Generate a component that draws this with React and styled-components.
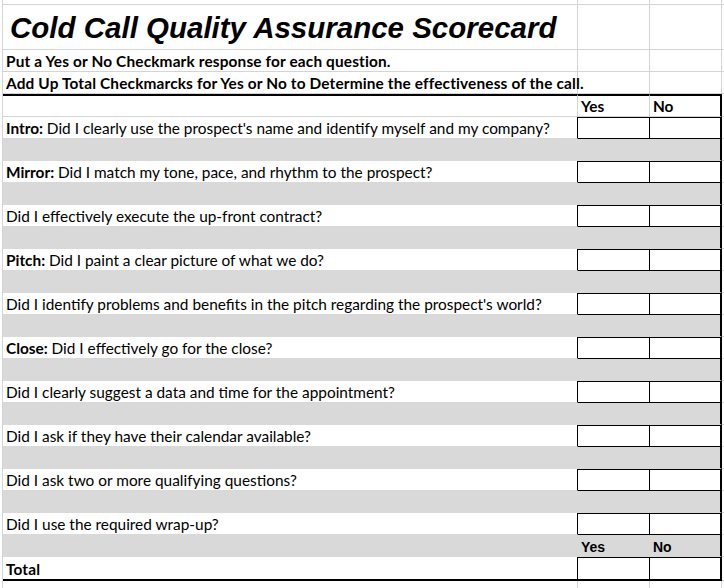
import React from 'react';
import styled, { createGlobalStyle } from 'styled-components';

const GRID = '#d4d4d4';
const FILL = '#d9d9d9';
const INK = '#000';

const GlobalStyle = createGlobalStyle`
  html, body {
    margin: 0;
    padding: 0;
    background: #fff;
  }
  body {
    font-family: Lato, "Noto Sans", sans-serif;
    color: ${INK};
    overflow: hidden;
  }
`;

const Sheet = styled.div`
  width: 724px;
  height: 588px;
  overflow: hidden;
  background: #fff;
`;

const Row = styled.div`
  display: grid;
  grid-template-columns: 3px 575px 72px 72px 1fr;
  height: ${p => p.$h}px;
  box-sizing: border-box;
`;

const Gutter = styled.div`
  border-right: 1px solid ${GRID};
`;

// column A: the question text
const LabelCell = styled.div`
  box-sizing: border-box;
  display: flex;
  align-items: ${p => (p.$center ? 'center' : 'flex-end')};
  padding: 0 0 1px 3px;
  white-space: nowrap;
  font-size: 15.4px;
  font-weight: ${p => (p.$bold ? 700 : 400)};
  letter-spacing: ${p => (p.$bold ? '0.15px' : '0')};
  background: ${p => (p.$fill ? FILL : '#fff')};
  border-top: ${p => (p.$topRule ? `2px solid ${INK}` : 'none')};
  border-bottom: ${p =>
    p.$bottomRule
      ? `2px solid ${INK}`
      : `1px solid ${p.$fill || p.$nextFill ? FILL : GRID}`};
  border-right: 1px solid
    ${p => (p.$boxed ? INK : p.$fill ? FILL : GRID)};
`;

// columns B and C: answer boxes
const CheckCell = styled.div`
  box-sizing: border-box;
  display: flex;
  align-items: flex-end;
  padding: 0 0 1px 3px;
  font-size: 15.4px;
  font-weight: 700;
  background: ${p => (p.$fill ? FILL : '#fff')};
  border-top: ${p =>
    p.$topRule ? `2px solid ${INK}` : p.$boxed ? `1px solid ${INK}` : 'none'};
  border-bottom: ${p =>
    p.$bottomRule
      ? `2px solid ${INK}`
      : p.$boxed
      ? `1px solid ${INK}`
      : `1px solid ${p.$fill ? FILL : GRID}`};
  border-right: ${p =>
    p.$edge
      ? `2px solid ${INK}`
      : `1px solid ${p.$boxed ? INK : p.$fill ? FILL : GRID}`};
`;

const EdgeCell = styled.div`
  border-bottom: 1px solid ${GRID};
`;

const PlainCell = styled.div`
  box-sizing: border-box;
  border-right: 1px solid ${GRID};
  border-bottom: 1px solid ${GRID};
`;

const Title = styled.h1`
  margin: 0;
  padding: 3px 0 0 4px;
  font-family: "Liberation Sans", Arial, sans-serif;
  font-size: 29.5px;
  font-weight: 700;
  font-style: italic;
  letter-spacing: 0;
`;

const Lead = styled.b`
  font-weight: 700;
`;

const FootLabel = styled.span`
  font-family: "Liberation Sans", Arial, sans-serif;
  font-size: 14px;
  font-weight: 700;
`;

const questions = [
  { lead: 'Intro:', text: "Did I clearly use the prospect's name and identify myself and my company?" },
  { lead: 'Mirror:', text: 'Did I match my tone, pace, and rhythm to the prospect?' },
  { text: 'Did I effectively execute the up-front contract?' },
  { lead: 'Pitch:', text: 'Did I paint a clear picture of what we do?' },
  { text: "Did I identify problems and benefits in the pitch regarding the prospect's world?" },
  { lead: 'Close:', text: 'Did I effectively go for the close?' },
  { text: 'Did I clearly suggest a data and time for the appointment?' },
  { text: 'Did I ask if they have their calendar available?' },
  { text: 'Did I ask two or more qualifying questions?' },
  { text: 'Did I use the required wrap-up?', footer: true },
];

const PlainRow = ({ h }) => (
  <Row $h={h}>
    <Gutter />
    <PlainCell />
    <PlainCell />
    <PlainCell />
    <EdgeCell />
  </Row>
);

const QuestionRow = ({ lead, text, footer }) => (
  <>
    <Row $h={22}>
      <Gutter />
      <LabelCell $boxed $nextFill>
        <span>
          {lead && <Lead>{lead} </Lead>}
          {text}
        </span>
      </LabelCell>
      <CheckCell $boxed />
      <CheckCell $boxed $edge />
      <EdgeCell />
    </Row>
    <Row $h={22}>
      <Gutter />
      <LabelCell $fill />
      <CheckCell $fill>{footer && <FootLabel>Yes</FootLabel>}</CheckCell>
      <CheckCell $fill $edge>{footer && <FootLabel>No</FootLabel>}</CheckCell>
      <EdgeCell />
    </Row>
  </>
);

export default function App() {
  return (
    <Sheet>
      <GlobalStyle />
      <PlainRow h={5} />
      <Row $h={45}>
        <Gutter />
        <LabelCell $center>
          <Title>Cold Call Quality Assurance Scorecard</Title>
        </LabelCell>
        <PlainCell />
        <PlainCell />
        <EdgeCell />
      </Row>
      <Row $h={22}>
        <Gutter />
        <LabelCell $bold>Put a Yes or No Checkmark response for each question.</LabelCell>
        <PlainCell />
        <PlainCell />
        <EdgeCell />
      </Row>
      <Row $h={22}>
        <Gutter />
        <LabelCell $bold>
          Add Up Total Checkmarcks for Yes or No to Determine the effectiveness of the call.
        </LabelCell>
        <PlainCell />
        <PlainCell />
        <EdgeCell />
      </Row>
      <Row $h={23}>
        <Gutter />
        <LabelCell $topRule />
        <CheckCell $topRule>Yes</CheckCell>
        <CheckCell $topRule $edge>No</CheckCell>
        <EdgeCell />
      </Row>
      {questions.map(q => (
        <QuestionRow key={q.text} lead={q.lead} text={q.text} footer={q.footer} />
      ))}
      <Row $h={24}>
        <Gutter />
        <LabelCell $bold $boxed $bottomRule>Total</LabelCell>
        <CheckCell $boxed $bottomRule />
        <CheckCell $boxed $bottomRule $edge />
        <EdgeCell />
      </Row>
      <PlainRow h={20} />
    </Sheet>
  );
}
